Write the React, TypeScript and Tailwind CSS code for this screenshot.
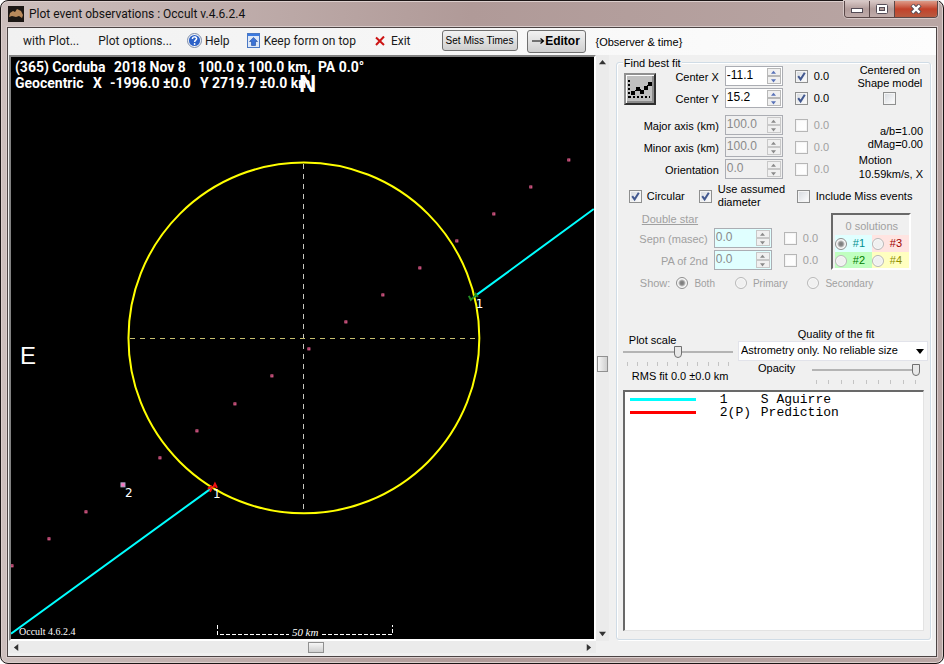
import type { ReactNode } from "react";
import { clsx } from "clsx";

type SpinnerProps = {
  id: string;
  label: string;
  value: string;
  error: string;
  enabled?: boolean;
  tint?: boolean;
};

const Tick = ({
  id,
  checked = false,
  disabled = false,
}: {
  id: string;
  checked?: boolean;
  disabled?: boolean;
}) => (
  <span className="relative block h-[13px] w-[13px] shrink-0">
    <input
      id={id}
      type="checkbox"
      defaultChecked={checked}
      disabled={disabled}
      className="peer block h-[13px] w-[13px] appearance-none border border-[#8e8f8f] bg-linear-to-br from-[#d5d9de] to-white shadow-[inset_0_0_0_1px_#f4f4f4] disabled:border-[#b6b6b6] disabled:from-[#fafafa]"
    />
    <svg
      viewBox="0 0 13 13"
      className="pointer-events-none absolute inset-0 hidden h-[13px] w-[13px] peer-checked:block"
    >
      <path d="M3.2 6.2 L5.6 9.4 L9.8 2.8" fill="none" stroke="#42588f" strokeWidth="2" />
    </svg>
  </span>
);

const Radio = ({
  id,
  name,
  checked = false,
}: {
  id: string;
  name: string;
  checked?: boolean;
}) => (
  <input
    id={id}
    type="radio"
    name={name}
    defaultChecked={checked}
    disabled
    className="block h-3 w-3 shrink-0 appearance-none rounded-full border border-[#b8b8b8] bg-[#f0f0f0] shadow-[inset_0_0_0_1px_#fafafa] checked:border-[#8f8f8f] checked:bg-[radial-gradient(circle,#777_0,#8c8c8c_2px,#f4f4f4_4px)]"
  />
);

const Arrow = ({ dir, className }: { dir: "up" | "down" | "left" | "right"; className: string }) => {
  const shapes = {
    up: "M0 6 L4 1 L8 6 Z",
    down: "M0 2 L4 7 L8 2 Z",
    left: "M6 0 L1 4 L6 8 Z",
    right: "M2 0 L7 4 L2 8 Z",
  };
  return (
    <svg viewBox="0 0 8 8" className={className} fill="currentColor">
      <path d={shapes[dir]} />
    </svg>
  );
};

const SpinnerRow = ({ id, label, value, error, enabled = false, tint = false }: SpinnerProps) => (
  <div className="flex h-5 items-center justify-end">
    <label
      htmlFor={id}
      className={clsx("mr-[6px] pt-[2px] whitespace-nowrap", tint && "text-[#a0a0a0]")}
    >
      {label}
    </label>
    <span
      className={clsx(
        "flex h-5 w-[58px] border border-[#abadb3] p-px",
        enabled ? "bg-white" : tint ? "bg-[#e0ffff]" : "bg-[#f0f0f0]",
      )}
    >
      <input
        id={id}
        type="text"
        defaultValue={value}
        disabled={!enabled}
        className="h-[15px] w-0 min-w-0 flex-1 bg-transparent text-[12px] leading-[15px] text-black disabled:text-[#8a8a8a]"
      />
      <span className="flex w-[14px] flex-col bg-[#f0f0f0]">
        {(["up", "down"] as const).map((dir) => (
          <button
            key={dir}
            type="button"
            aria-label={`${label} ${dir}`}
            disabled={!enabled}
            className="flex flex-1 items-center justify-center border border-[#b8b8b8] text-[#5872b8] disabled:border-[#c8c8c8] disabled:text-[#8a8a8a]"
          >
            <Arrow dir={dir} className="h-[5px] w-[5px]" />
          </button>
        ))}
      </span>
    </span>
    <span className="ml-3 flex items-center gap-[6px]">
      <Tick id={`${id}-fit`} checked={enabled} disabled={!enabled} />
      <label htmlFor={`${id}-fit`} className={clsx("w-[17px]", !enabled && "text-[#a0a0a0]")}>
        {error}
      </label>
    </span>
  </div>
);

const Slider = ({ id, value, ticks }: { id: string; value: number; ticks: number }) => (
  <div>
    <input
      id={id}
      type="range"
      min={0}
      max={100}
      defaultValue={value}
      className="block h-3 w-full appearance-none bg-[linear-gradient(#b4b4b4,#b4b4b4)] bg-[length:100%_2px] bg-center bg-no-repeat [&::-webkit-slider-thumb]:h-3 [&::-webkit-slider-thumb]:w-2 [&::-webkit-slider-thumb]:appearance-none [&::-webkit-slider-thumb]:rounded-b-sm [&::-webkit-slider-thumb]:border [&::-webkit-slider-thumb]:border-[#707070] [&::-webkit-slider-thumb]:bg-[#e8e8e8]"
    />
    <div className="mt-1 flex justify-between px-1">
      {Array.from({ length: ticks }, (_, i) => (
        <span key={i} className="h-1 w-px bg-[#c4c4c4]" />
      ))}
    </div>
  </div>
);

const WindowButton = ({ label, close, children }: { label: string; close?: boolean; children: ReactNode }) => (
  <button
    type="button"
    aria-label={label}
    className={clsx(
      "flex h-4 items-center justify-center border-r border-[#5a4848] last:border-r-0",
      close
        ? "w-[42px] bg-linear-to-b from-[#dc9a88] via-[#c2412a] to-[#b85a40]"
        : "w-[25px] bg-linear-to-b from-[#d8c8c6] via-[#b29c9a] to-[#c0acaa]",
    )}
  >
    {children}
  </button>
);

const TitleBar = () => (
  <header className="flex h-[26px] items-start justify-between pr-[5px] pl-[7px]">
    <div className="flex h-[26px] items-center gap-[5px]">
      <svg viewBox="0 0 16 16" className="h-4 w-4">
        <rect width="16" height="16" fill="#1c1714" />
        <path
          d="M1 11 L2 7 L5 5 L7 6 L9 3 L13 5 L15 9 L14 12 L11 10 L8 11 L4 10 Z"
          fill="#b98a5c"
        />
      </svg>
      <h1 className="font-[Roboto,'Open_Sans',sans-serif] text-[12px] text-[#111]">
        Plot event observations : Occult v.4.6.2.4
      </h1>
    </div>
    <div className="flex overflow-hidden rounded-b-[4px] border border-t-0 border-[#5a4848] shadow-[0_0_0_1px_#d6c8c6]">
      <WindowButton label="Minimize">
        <svg viewBox="0 0 12 6" className="mt-1 h-[6px] w-3">
          <rect x="0.5" y="0.5" width="11" height="4" fill="#fff" stroke="#544c56" />
        </svg>
      </WindowButton>
      <WindowButton label="Maximize">
        <svg viewBox="0 0 12 10" className="h-[10px] w-3">
          <rect x="0.5" y="0.5" width="11" height="9" rx="1" fill="#fff" stroke="#544c56" />
          <rect x="3.5" y="3.5" width="5" height="3" fill="#b29c9a" stroke="#544c56" />
        </svg>
      </WindowButton>
      <WindowButton label="Close" close>
        <svg viewBox="0 0 12 10" className="h-[10px] w-3">
          <path d="M2 1 L10 9 M10 1 L2 9" stroke="#544c56" strokeWidth="4.4" />
          <path d="M2.4 1.4 L9.6 8.6 M9.6 1.4 L2.4 8.6" stroke="#fff" strokeWidth="2.4" />
        </svg>
      </WindowButton>
    </div>
  </header>
);

const MenuBar = () => (
  <nav className="flex h-[27px] items-center bg-linear-to-r from-[#f1f1f1] to-[#fdfdfd] pb-[2px] font-[Roboto,'Open_Sans',sans-serif] text-[12px] text-[#1a1a1a]">
    <button type="button" className="ml-[15px]">with Plot...</button>
    <button type="button" className="ml-[19px]">Plot options...</button>
    <button type="button" className="ml-[15px] flex items-center gap-[3px]">
      <svg viewBox="0 0 15 15" className="h-[15px] w-[15px]">
        <circle cx="7.5" cy="7.5" r="7" fill="#f2f5fb" stroke="#7d8ba6" />
        <circle cx="7.5" cy="7.5" r="5.6" fill="#2c62c8" />
        <path
          d="M5.4 6 C5.4 3.2 9.8 3.2 9.6 5.8 C9.5 7.2 7.6 7.2 7.6 9"
          fill="none"
          stroke="#fff"
          strokeWidth="1.5"
        />
        <circle cx="7.6" cy="11" r="0.9" fill="#fff" />
      </svg>
      Help
    </button>
    <button type="button" className="ml-[17px] flex items-center gap-[4px]">
      <svg viewBox="0 0 13 15" className="h-[15px] w-[13px]">
        <rect x="0.5" y="0.5" width="12" height="14" fill="#dfe9f8" stroke="#4a78c4" />
        <rect x="1" y="1" width="11" height="2" fill="#3d7be0" />
        <path
          d="M6.5 4.4 L10.5 8.5 L8.5 8.5 L8.5 12.5 L4.5 12.5 L4.5 8.5 L2.5 8.5 Z"
          fill="#3b72d6"
          stroke="#1f4a9c"
          strokeWidth="0.6"
        />
      </svg>
      Keep form on top
    </button>
    <button type="button" className="ml-[19px] flex items-center gap-[6px]">
      <svg viewBox="0 0 10 10" className="h-[10px] w-[10px]">
        <path d="M1 1.5 L9 9 M9 0.5 L1 9" stroke="#cc1414" strokeWidth="2" fill="none" />
      </svg>
      Exit
    </button>
    <div className="ml-[31px] flex items-center pt-px font-['Liberation_Sans',Arial,sans-serif] text-[11px] text-black">
      <button
        type="button"
        className="mb-px h-[21px] w-[76px] rounded-[3px] border border-[#707070] bg-linear-to-b from-[#f2f2f2] to-[#cfcfcf] text-[10px] whitespace-nowrap"
      >
        Set Miss Times
      </button>
      <button
        type="button"
        className="ml-[9px] flex h-[23px] w-[59px] items-center justify-center rounded-[3px] border border-[#707070] bg-linear-to-b from-[#f2f2f2] to-[#cfcfcf] text-[12px] font-bold"
      >
        <svg viewBox="0 0 13 8" className="h-2 w-[13px]">
          <path d="M0 4 H11 M8.5 1.5 L11.5 4 L8.5 6.5" fill="none" stroke="#000" strokeWidth="1.2" />
        </svg>
        Editor
      </button>
      <span className="ml-[10px] pt-[2px]">{"{Observer & time}"}</span>
    </div>
  </nav>
);

// predicted path, one mark per time step
const PATH_MARKS = [
  [1, 509], [38, 482], [75, 455], [149, 401], [186, 374], [224, 347], [261, 319], [298, 292],
  [335, 265], [372, 238], [409, 211], [446, 184], [483, 157], [520, 130], [558, 103],
];

const Plot = () => (
  <svg
    viewBox="0 0 583 582"
    preserveAspectRatio="xMinYMin meet"
    className="absolute inset-0 h-full w-full font-[Roboto,'Liberation_Sans',sans-serif]"
    fill="#fff"
  >
    <g strokeDasharray="5 5" shapeRendering="crispEdges">
      <path d="M292.5 107 V456" stroke="#c8c8c0" />
      <path d="M119 281.5 H468" stroke="#c8c070" />
    </g>
    <path d="M0 577 L201 431 M463 240 L583 152" stroke="#00ffff" strokeWidth="2" />
    <circle cx="293" cy="281" r="175.5" fill="none" stroke="#ffff00" strokeWidth="2" />
    <g fill="#401028" stroke="#e86090">
      {PATH_MARKS.map(([x, y]) => (
        <rect key={x} x={x - 1} y={y - 1} width="2" height="2" />
      ))}
    </g>
    <rect x="110" y="426" width="4" height="4" fill="#ff70c0" stroke="#a8a8c8" />
    <path
      d="M197 432 l4 -3 M199 435 l2 -4 M202 431 l2 -4 l2 4"
      stroke="#ee1111"
      strokeWidth="2"
      fill="none"
    />
    <path d="M458 239 l2 4 l5 -5 M464 236 l3 4" stroke="#228b22" strokeWidth="2" fill="none" />
    <g fontSize="12" fontFamily="DejaVu Sans, Verdana, sans-serif">
      <text x="114" y="440">2</text>
      <text x="202" y="441">1</text>
      <text x="465" y="251">1</text>
    </g>
    <g fontSize="14" fontWeight="bold">
      <text x="4" y="15">(365) Corduba</text>
      <text x="103" y="15">2018 Nov 8</text>
      <text x="187" y="15">100.0 x 100.0 km,</text>
      <text x="307" y="15">PA 0.0°</text>
      <text x="4" y="31">Geocentric</text>
      <text x="82" y="31">X</text>
      <text x="99" y="31">-1996.0 ±0.0</text>
      <text x="189" y="31">Y 2719.7 ±0.0 km</text>
    </g>
    <g fontFamily="Liberation Sans, Arial, sans-serif" fontSize="24">
      <text x="288" y="35" fontWeight="bold">N</text>
      <text x="9" y="307">E</text>
    </g>
    <g fontFamily="Liberation Serif, Times New Roman, serif">
      <text x="8" y="578" fontSize="10">Occult 4.6.2.4</text>
      <text x="281" y="579" fontSize="11" fontStyle="italic">50 km</text>
    </g>
    <path
      d="M206.5 568 V577.5 H278 M311 577.5 H381.5 V568"
      fill="none"
      stroke="#fff"
      strokeDasharray="4 2"
      shapeRendering="crispEdges"
    />
  </svg>
);

const PlotPane = () => (
  <main className="flex min-w-0 flex-1 flex-col pl-px">
    <div className="flex flex-1">
      <div className="relative flex-1 border-2 border-t-[#828282] border-r-white border-b-white border-l-[#828282] bg-black">
        <Plot />
      </div>
      <div className="flex w-[13px] flex-col items-center justify-between bg-[#ebebeb] py-1 text-[#333]">
        <button type="button" aria-label="Scroll up">
          <Arrow dir="up" className="h-[7px] w-[7px]" />
        </button>
        <span className="mt-8 h-4 w-[11px] border border-[#909090] bg-linear-to-r from-[#f6f6f6] to-[#cfcfcf]" />
        <button type="button" aria-label="Scroll down">
          <Arrow dir="down" className="h-[7px] w-[7px]" />
        </button>
      </div>
    </div>
    <div className="mr-[13px] mb-[3px] flex h-[12px] items-center justify-between bg-[#ebebeb] px-1 text-[#333]">
      <button type="button" aria-label="Scroll left">
        <Arrow dir="left" className="h-[7px] w-[7px]" />
      </button>
      <span className="ml-7 h-[11px] w-4 border border-[#909090] bg-linear-to-b from-[#f6f6f6] to-[#cfcfcf]" />
      <button type="button" aria-label="Scroll right">
        <Arrow dir="right" className="h-[7px] w-[7px]" />
      </button>
    </div>
  </main>
);

const FitButton = () => (
  <button
    type="button"
    aria-label="Find best fit"
    className="mt-[7px] h-8 w-8 shrink-0 border-2 border-t-[#909090] border-r-[#303030] border-b-[#303030] border-l-[#909090] bg-[#c0c0c0] shadow-[inset_1px_1px_0_#fff,inset_-2px_-2px_0_#8c8c8c]"
  >
    <svg viewBox="0 0 28 28" className="h-full w-full" shapeRendering="crispEdges">
      <path d="M3 5 V23" stroke="#000" strokeWidth="2" strokeDasharray="2 2" />
      <path d="M3 22 H24" stroke="#000" strokeWidth="2" strokeDasharray="2 2" />
      <path d="M8 17 L12 13 L17 16 L23 9" fill="none" stroke="#000" strokeWidth="1" />
      <path d="M5 16h4v4h-4z M10 12h4v4h-4z M14 15h4v4h-4z M18 11h4v4h-4z M22 7h4v4h-4z" />
    </svg>
  </button>
);

const SOLUTIONS = [
  { id: "sol1", label: "#1", cell: "bg-[#e0ffff] text-[#009090]" },
  { id: "sol3", label: "#3", cell: "bg-[#ffe4e1] text-[#a00000]" },
  { id: "sol2", label: "#2", cell: "bg-[#c0ffc0] text-[#008000]" },
  { id: "sol4", label: "#4", cell: "bg-[#ffffc0] text-[#909000]" },
];

const SHOW = [
  { id: "both", label: "Both", gap: "mr-5" },
  { id: "primary", label: "Primary", gap: "mr-5" },
  { id: "secondary", label: "Secondary", gap: "" },
];

const STARS = [
  { key: "1", name: "S Aguirre", color: "bg-[#00ffff]" },
  { key: "2(P)", name: "Prediction", color: "bg-[#ff0000]" },
];

const DoubleStar = () => (
  <section className="mt-[3px] text-[#a0a0a0]">
    <div className="flex">
      <div className="flex w-[203px] flex-col gap-[2px]">
        <h2 className="ml-[25px] leading-[14px] underline">Double star</h2>
        <SpinnerRow id="sepn" label="Sepn (masec)" value="0.0" error="0.0" tint />
        <SpinnerRow id="pa2" label="PA of 2nd" value="0.0" error="0.0" tint />
      </div>
      <div className="mt-px ml-[11px] h-[57px] w-20 overflow-hidden border-2 border-t-[#696969] border-r-white border-b-white border-l-[#696969] pt-[3px] pl-[2px]">
        <p className="text-center leading-[16px]">0 solutions</p>
        <div className="mt-px grid grid-cols-2">
          {SOLUTIONS.map(({ id, label, cell }) => (
            <span key={id} className={clsx("flex h-[17px] items-center gap-[6px]", cell)}>
              <Radio id={id} name="solution" checked={id === "sol1"} />
              <label htmlFor={id}>{label}</label>
            </span>
          ))}
        </div>
      </div>
    </div>
    <div className="mt-[5px] ml-[23px] flex items-center">
      <span className="mr-[6px]">Show:</span>
      {SHOW.map(({ id, label, gap }) => (
        <span key={id} className={clsx("flex items-center gap-[6px] text-[10px]", gap)}>
          <Radio id={id} name="show" checked={id === "both"} />
          <label htmlFor={id}>{label}</label>
        </span>
      ))}
    </div>
  </section>
);

const FitPanel = () => (
  <fieldset className="relative mt-[7px] mr-[5px] mb-4 flex w-[314px] shrink-0 flex-col rounded-[3px] border border-[#d0dce6] pt-px shadow-[inset_1px_1px_0_#fff,1px_1px_0_#fff]">
    <legend className="absolute -top-[7px] left-[6px] bg-[#f0f0f0] px-px leading-[14px]">
      Find best fit
    </legend>
    <div className="flex">
      <div className="w-[214px] pt-[2px]">
        <div className="flex justify-between pl-[7px]">
          <FitButton />
          <div className="flex flex-col gap-[2px]">
            <SpinnerRow id="cx" label="Center X" value="-11.1" error="0.0" enabled />
            <SpinnerRow id="cy" label="Center Y" value="15.2" error="0.0" enabled />
          </div>
        </div>
        <div className="mt-[7px] flex flex-col gap-[2px]">
          <SpinnerRow id="major" label="Major axis (km)" value="100.0" error="0.0" />
          <SpinnerRow id="minor" label="Minor axis (km)" value="100.0" error="0.0" />
          <SpinnerRow id="orient" label="Orientation" value="0.0" error="0.0" />
        </div>
      </div>
      <div className="flex flex-1 flex-col pr-[7px] pl-[26px]">
        <label htmlFor="centered" className="text-center leading-[13px] whitespace-nowrap">
          Centered on
          <br />
          Shape model
        </label>
        <div className="mt-[2px] flex justify-center">
          <Tick id="centered" />
        </div>
        <p className="mt-5 text-right leading-[13px]">
          a/b=1.00
          <br />
          dMag=0.00
        </p>
        <p className="mt-[2px] ml-[2px] leading-[14px] whitespace-nowrap">
          Motion
          <br />
          10.59km/s, X
        </p>
      </div>
    </div>
    <div className="mt-[2px] flex h-[26px] items-center pl-3">
      <Tick id="circular" checked />
      <label htmlFor="circular" className="ml-[5px] w-[52px]">Circular</label>
      <Tick id="assumed" checked />
      <label htmlFor="assumed" className="ml-[6px] w-[79px] leading-[13px]">
        Use assumed
        <br />
        diameter
      </label>
      <Tick id="miss" />
      <label htmlFor="miss" className="ml-[6px] whitespace-nowrap">Include Miss events</label>
    </div>
    <DoubleStar />
    <div className="mt-[35px] flex justify-between pr-[2px] pl-[6px]">
      <div className="w-[110px] pt-[7px]">
        <label htmlFor="scale" className="ml-[6px] block leading-[12px]">Plot scale</label>
        <Slider id="scale" value={50} ticks={11} />
        <p className="mt-[3px] ml-[9px] leading-[14px] whitespace-nowrap">RMS fit 0.0 ±0.0 km</p>
      </div>
      <div className="w-[190px]">
        <label htmlFor="quality" className="block pl-[6px] text-center leading-[14px]">Quality of the fit</label>
        <div className="relative">
          <select
            id="quality"
            className="block h-5 w-full appearance-none border border-[#e2e3ea] bg-white pl-[2px] whitespace-nowrap"
          >
            <option>Astrometry only. No reliable size</option>
          </select>
          <Arrow dir="down" className="pointer-events-none absolute top-[6px] right-1 h-2 w-2" />
        </div>
        <div className="flex justify-between pr-2 pl-5">
          <label htmlFor="opacity" className="leading-[14px]">Opacity</label>
          <div className="w-[108px] pt-[3px]">
            <Slider id="opacity" value={100} ticks={9} />
          </div>
        </div>
      </div>
    </div>
    <ul className="mx-[6px] mt-[6px] mb-2 flex-1 border border-t-2 border-l-2 border-[#e3e3e3] border-t-[#696969] border-l-[#696969] bg-white pt-px pl-[5px] font-['Liberation_Mono','Courier_New',monospace] text-[13px] leading-[13px]">
      {STARS.map(({ key, name, color }) => (
        <li key={key} className="flex">
          <span className={clsx("mt-[5px] mr-6 h-[3px] w-[66px]", color)} />
          <span className="w-[41px]">{key}</span>
          <span>{name}</span>
        </li>
      ))}
    </ul>
  </fieldset>
);

export default function App() {
  return (
    <div className="flex min-h-screen flex-col rounded-lg border border-[#1c1616] bg-linear-to-r from-[#cdbfbd] via-[#b09a98] to-[#b9a6a4] font-['Liberation_Sans',Arial,sans-serif] text-[11px] text-black shadow-[inset_0_0_0_1px_#dccfcd]">
      <TitleBar />
      <div className="mx-[6px] mb-[6px] flex flex-1 flex-col border border-[#4c4444] bg-[#f0f0f0] shadow-[0_0_0_1px_#d9cccb]">
        <MenuBar />
        <div className="flex flex-1">
          <PlotPane />
          <div className="flex pl-[7px]">
            <FitPanel />
          </div>
        </div>
      </div>
    </div>
  );
}
